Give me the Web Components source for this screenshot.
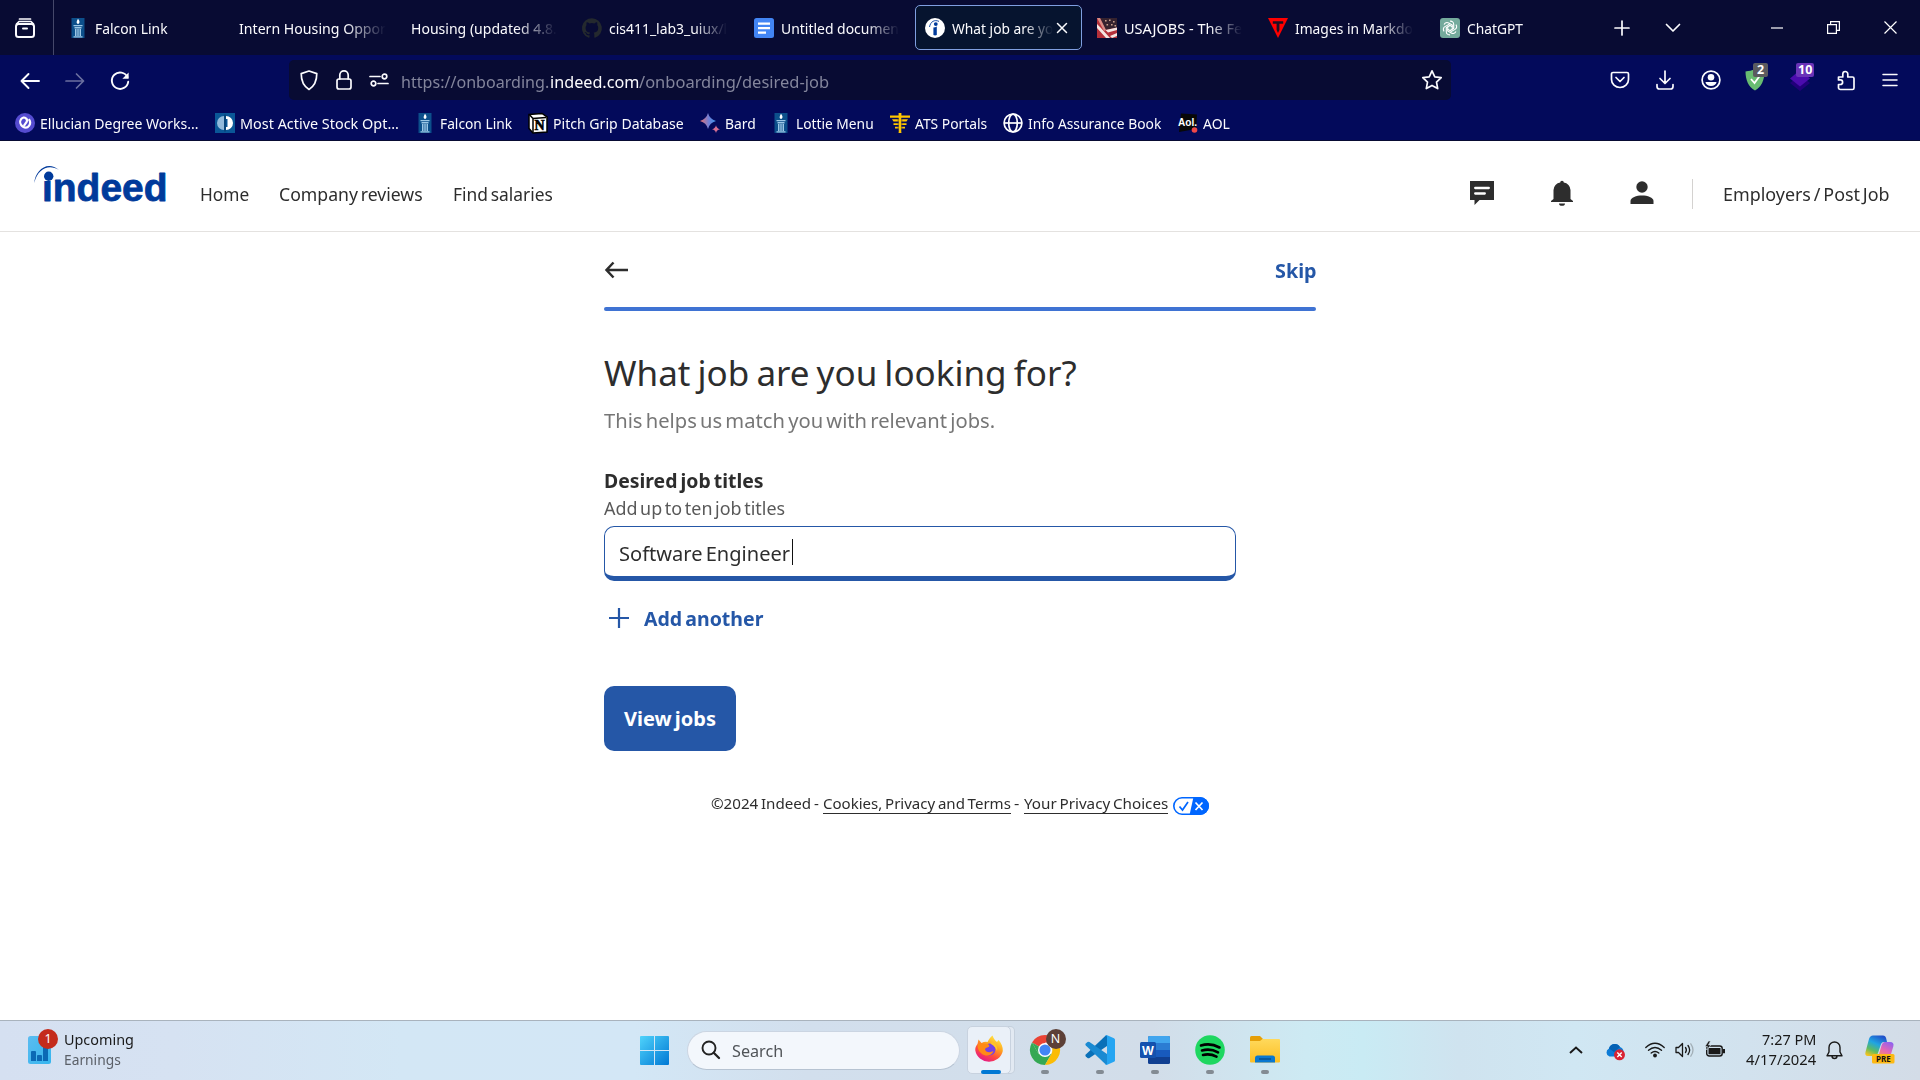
<!DOCTYPE html>
<html lang="en">
<head>
<meta charset="utf-8">
<title>What job are you looking for?</title>
<style>
html,body{margin:0;padding:0}
body{width:1920px;height:1080px;overflow:hidden;background:#fff;display:flex;flex-direction:column;font-family:"Noto Sans","Open Sans",sans-serif;color:#2d2d2d}
</style>
</head>
<body>
<browser-tabs></browser-tabs>
<browser-toolbar></browser-toolbar>
<bookmarks-bar></bookmarks-bar>
<site-header></site-header>
<job-form></job-form>
<site-footer></site-footer>
<task-bar></task-bar>
<script>
const TORCH = '<rect x="3.5" width="13" height="20" fill="#0c4f8b"/><path d="M10 .8c1.700 2 2 3.700.8 5H9.300C8 4.500 8.800 3.200 10 .8z" fill="#fff"/><path d="M5.500 7h9v1.300h-9zM6.500 9h7v1.500h-7zM7 11h1.500v7H7zM9.300 11h1.400v7H9.300zM11.500 11H13v7h-1.500zM5.500 18.300h9v1.200h-9z" fill="#9cc7e6"/>';
const L = 'fill="none" stroke="#fbfbfe" stroke-width="1.700" stroke-linecap="round" stroke-linejoin="round"';
const ICONS = {
view:[20,20,`<g ${L}><rect x="1" y="6" width="18" height="13" rx="2.500" stroke-width="2"/><path d="M1.500 6l2.500-2.500h12L18.500 6M4.500 1h11" /><path d="M8 10.500h4" stroke-width="2"/></g>`],
torch:[20,20,TORCH],
github:[20,20,'<path fill="#24292e" d="M10 .2a10 10 0 0 0-3.200 19.500c.5.1.7-.2.7-.5v-1.900c-2.800.6-3.400-1.200-3.400-1.200-.5-1.200-1.100-1.500-1.100-1.500-.9-.6.1-.6.1-.6 1 .1 1.500 1 1.500 1 .9 1.600 2.400 1.100 2.900.9.1-.7.400-1.100.6-1.300-2.200-.3-4.500-1.100-4.500-4.900 0-1.100.4-2 1-2.700-.1-.2-.4-1.200.1-2.600 0 0 .8-.3 2.700 1a9.500 9.500 0 0 1 5 0c1.900-1.300 2.700-1 2.700-1 .5 1.400.2 2.400.1 2.600.6.7 1 1.600 1 2.700 0 3.900-2.300 4.700-4.600 4.900.4.3.7.900.7 1.900v2.700c0 .3.2.6.7.5A10 10 0 0 0 10 .2z"/>'],
docs:[20,20,'<rect width="20" height="20" rx="2.500" fill="#4285f4"/><path d="M4 4.500h12v2.300H4zM4 9h12v2.300H4zM4 13.500h8v2.300H4z" fill="#fff"/>'],
indeed:[20,20,'<circle cx="10" cy="10" r="10" fill="#fff"/><path d="M8.400 9.500q2 0 3.400-1V17q-1.700.9-3.400 0z" fill="#003a9b"/><circle cx="10.800" cy="6.100" r="1.900" fill="#003a9b"/><path d="M4.500 9C5.500 3.500 9.500 1.300 14 3.400" fill="none" stroke="#003a9b" stroke-width=".9"/>'],
x:[12,12,`<path ${L} style="stroke-width:1.500" d="M1.500 1.500l9 9M10.500 1.500l-9 9"/>`],
usa:[20,20,'<rect width="20" height="20" fill="#b5303a"/><path d="M3 0h17v9.500L8.500 12z" fill="#35222e"/><path d="M3 9l10 11H9L0 10V6zM8.500 12L20 9.500V12L11 14.500zM13 18l7-3v3l-5 2z" fill="#f5e6e2"/><path d="M0 0h3l6 12-2 1z" fill="#d98c86"/><path d="M8 2h1.600v1.600H8zM12 1.500h1.600v1.600H12zM16 3h1.600v1.600H16zM9.500 6h1.600v1.600H9.500zM14 6h1.600v1.600H14zM17.500 7h1.600v1.600h-1.600z" fill="#c9a08d"/>'],
tri:[20,20,'<path d="M0 0h20L10 20z" fill="#f00"/><path d="M4.800 3.300h10.400v2.400h-3.800V12L10 15l-1.400-3V5.700H4.800z" fill="#1c1024"/>'],
gpt:[20,20,'<rect width="20" height="20" rx="3" fill="#74aa9c"/><g fill="none" stroke="#fff" stroke-width="1.100">'+[0,60,120,180,240,300].map(a=>`<path d="M10 3.200c2-.3 3.700 1 3.700 3.100v4.200L10 12.600" transform="rotate(${a} 10 10)"/>`).join('')+'</g>'],
plus:[16,16,`<path ${L} d="M8 1v14M1 8h14"/>`],
down:[16,16,`<path ${L} d="M1.500 4.500L8 11l6.500-6.500"/>`],
min:[12,12,'<path d="M0 6h12" stroke="#fff" stroke-width="1.200"/>'],
restore:[13,13,'<path d="M.6 3.600h8.800v8.800H.6zM3.600 3.600v-3h8.800v8.800h-3" fill="none" stroke="#fff" stroke-width="1.200"/>'],
close:[13,13,'<path d="M.5.5l12 12M12.500.5l-12 12" stroke="#fff" stroke-width="1.200"/>'],
back:[20,20,`<path ${L} style="stroke-width:1.900" d="M19 10H1.500M8.500 3L1.500 10l7 7"/>`],
fwd:[20,20,`<path ${L} opacity=".42" d="M1 10h17.500M11.500 3l7 7-7 7"/>`],
reload:[20,20,`<path ${L} style="stroke-width:1.900" d="M17.500 6.200A8.200 8.200 0 1 0 18.200 10.800"/><path d="M18.600 1.500v6.200h-6.200z" fill="#fbfbfe"/>`],
shield:[20,22,`<path ${L} d="M10 2l7.800 2.600c0 7.400-2.300 12.600-7.800 15.900C4.500 17.200 2.200 12 2.200 4.600z"/>`],
lock:[18,22,`<g ${L}><rect x="2" y="10" width="14" height="10" rx="2"/><path d="M4.800 10V6a4.200 4.200 0 0 1 8.400 0v4"/></g>`],
perm:[20,14,`<g ${L}><path d="M1 3.500h10M9 10.500h10"/><circle cx="15.500" cy="3.500" r="2.300"/><circle cx="4.500" cy="10.500" r="2.300"/></g>`],
star:[22,22,`<path ${L} d="M11 1.800l2.800 6 6.400.8-4.700 4.500 1.200 6.500-5.700-3.200-5.700 3.200 1.200-6.500L1.800 8.600l6.400-.8z"/>`],
pocket:[20,20,`<g ${L}><path d="M3 2.500h14a1.500 1.500 0 0 1 1.500 1.500v5.500a8.500 8 0 0 1-17 0V4A1.500 1.500 0 0 1 3 2.500z"/><path d="M6 7.500l4 4 4-4"/></g>`],
download:[20,20,`<path ${L} d="M10 1v12M5 8.500l5 5 5-5M2 14.500v2A2.500 2.500 0 0 0 4.500 19h11a2.500 2.500 0 0 0 2.500-2.500v-2"/>`],
account:[20,20,`<circle cx="10" cy="10" r="8.900" ${L}/><circle cx="10" cy="7.300" r="3.300" fill="#fbfbfe"/><path d="M4.500 12h11a5.500 4 0 0 1-11 0z" fill="#fbfbfe"/>`],
adguard:[20,22,'<path d="M10 0c3 1.500 6 2 9.500 2.500C19.500 11 16.500 18 10 21.500 3.500 18 .5 11 .5 2.500 4 2 7 1.500 10 0z" fill="#68bc71"/><path d="M6 10l3.500 4L15 6.500" fill="none" stroke="#fff" stroke-width="1.800"/>'],
purple:[20,22,'<path d="M10 6l10 8-10 8-10-8z" fill="#21007a"/><path d="M10 1l10 8.500-10 8-10-8z" fill="#4b0cae"/>'],
puzzle:[20,22,`<path ${L} d="M2.500 8h4.300V5a2.500 2.500 0 0 1 5 0v3h4.700a1.500 1.500 0 0 1 1.500 1.500V19a1.500 1.500 0 0 1-1.500 1.500h-12A2 2 0 0 1 2.500 19v-3.500h1.800a2.300 2.300 0 0 0 0-4.600H2.500z"/>`],
menu:[16,16,`<path ${L} style="stroke-width:1.500" d="M1 2.500h14M1 8h14M1 13.500h14"/>`],
ellucian:[20,20,'<circle cx="10" cy="10" r="10" fill="#554cd0"/><path d="M7 10.700h4.800a2.800 2.800 0 0 0 2.500-2.500c.3-2-1-3.600-3.400-3.600-3 0-5.100 2.500-5.100 5.600 0 2.700 1.700 4.700 4.400 4.700 2.500 0 4.400-1.600 5.200-4" fill="none" stroke="#fff" stroke-width="2.200" transform="rotate(-55 10 10)"/>'],
stock:[20,20,'<rect width="20" height="20" fill="#0a5797"/><path d="M9 3A7 7 0 0 0 9 17z" fill="#92badb"/><path d="M11 3a7 7 0 0 1 0 14v-3h1.500V6H11z" fill="#fff"/><path d="M10 1.500v17" stroke="#053969" stroke-width="1.200"/>'],
notion:[20,20,'<path d="M1 1.500L14 .5l5 3.500v15l-14 1-4-4.500z" fill="#fff" stroke="#000" stroke-width="1.500"/><path d="M1.500 1.800L5 5.500v14" fill="none" stroke="#000" stroke-width="1.500"/><path d="M5 5.500l13-1" stroke="#000" stroke-width="1.500"/><text x="6.500" y="17.200" font-family="Liberation Serif" font-weight="bold" font-size="14" fill="#000" stroke="#000" stroke-width=".6">N</text>'],
bard:[20,20,'<defs><linearGradient id="g"><stop offset="0" stop-color="#e8716f"/><stop offset=".55" stop-color="#6f7fd8"/><stop offset="1" stop-color="#3d93e8"/></linearGradient></defs><path d="M8 0c1.300 4.300 3.700 6.700 8 8-4.300 1.300-6.700 3.700-8 8-1.300-4.300-3.700-6.700-8-8 4.300-1.300 6.700-3.700 8-8z" fill="url(#g)"/><path d="M16 12.300c.6 2.300 1.600 3.300 4 4-2.400.6-3.400 1.700-4 3.700-.6-2-1.600-3.100-4-3.700 2.400-.7 3.400-1.700 4-4z" fill="#d56e92"/>'],
ats:[20,20,'<path d="M8.600 0h2.800v20H8.600zM0 2.500h20v2.300H0zM2 6.300h16l-1.500 2.300h-13zM3.500 10.200h13V12h-13zM5 13.700h10v1.900H5z" fill="#ffc600"/><path d="M8.200 5v14M11.800 5v14" stroke="#030a5b" stroke-width=".5"/>'],
globe:[20,20,'<g fill="none" stroke="#fff" stroke-width="1.700"><circle cx="10" cy="10" r="8.900"/><ellipse cx="10" cy="10" rx="4.300" ry="8.900"/><path d="M1 10h18"/></g>'],
aol:[20,20,'<path d="M3 .5l16 1-1 14.500L1 19z" fill="#080808"/><circle cx="16.500" cy="17" r="2.800" fill="#f04848"/><text x="0" y="13" font-family="Liberation Sans" font-weight="bold" font-size="10" textLength="19" lengthAdjust="spacingAndGlyphs" fill="#fff">Aol.</text>'],
logo:[134,38,'<text x="8" y="35.600" font-family="Liberation Sans" font-weight="bold" font-size="39.500" textLength="125.500" lengthAdjust="spacingAndGlyphs" fill="#003a9b" stroke="#003a9b" stroke-width=".8" stroke-linejoin="round">indeed</text><path d="M8 5h12v11H8z" fill="#fff"/><circle cx="14.700" cy="11.300" r="4.700" fill="#003a9b"/><path d="M.3 18C1 6 13-5 25 5 15-1 4 3 .3 18z" fill="#003a9b"/>'],
msg:[24,24,'<path d="M0 0h24v19H9.500L4.500 24v-5H0z" fill="#2d2d2d"/><path d="M5.200 7h13.600M5.200 12.500h9.600" stroke="#fff" stroke-width="2.300" stroke-linecap="round"/>'],
bell:[24,26,'<path d="M10.200 2.500a1.800 1.800 0 0 1 3.600 0A8 8 0 0 1 20.500 10v9l2.500 2v1H1v-1l2.500-2v-9a8 8 0 0 1 6.700-7.500zM9 23.500h6a3 2.300 0 0 1-6 0z" fill="#2d2d2d"/>'],
person:[24,24,'<circle cx="12" cy="6" r="5.700" fill="#2d2d2d"/><path d="M.5 23v-3c0-3.500 6-5.500 11.500-5.500s11.500 2 11.500 5.500v3z" fill="#2d2d2d"/>'],
arrow:[24,18,'<path d="M24 9H3M9.500 1.500L2.500 9l7 7.500" fill="none" stroke="#2d2d2d" stroke-width="2.500"/>'],
add:[20,20,'<path d="M10 0v20M0 10h20" stroke="#2557a7" stroke-width="2.200"/>'],
pill:[36,18,'<rect x=".8" y=".8" width="34.400" height="16.400" rx="8.200" fill="#fff" stroke="#06f" stroke-width="1.600"/><path d="M20.500 0H27a9 9 0 0 1 0 18H16.500z" fill="#06f"/><path d="M6.500 9.500l3 3.500 5.500-8" fill="none" stroke="#06f" stroke-width="1.700"/><path d="M22.500 5.500l7 7.500M29.500 5.500l-7 7.500" stroke="#fff" stroke-width="1.700"/>'],
widget:[24,29,'<defs><linearGradient id="a" x2="1" y2="1"><stop stop-color="#5bbcf1"/><stop offset="1" stop-color="#35b5ee"/></linearGradient></defs><rect width="23" height="28" rx="2.500" fill="url(#a)"/><path d="M3 16q0-1 1-1h3q1 0 1 1v9H3zM9 20q0-1 1-1h3q1 0 1 1v5H9zM15 11h5v14h-5z" fill="#0b69b5"/>'],
start:[29,29,'<defs><linearGradient id="a" x2="1" y2="1"><stop stop-color="#4fd3fb"/><stop offset="1" stop-color="#0078d4"/></linearGradient></defs><path d="M0 1q0-1 1-1h13v14H0zM15 0h13q1 0 1 1v13H15zM0 15h14v14H1q-1 0-1-1zM15 15h14v13q0 1-1 1H15z" fill="url(#a)"/>'],
search:[19,20,'<circle cx="8" cy="8" r="6.500" fill="none" stroke="#222" stroke-width="1.900"/><path d="M12.700 12.700L18 18" stroke="#222" stroke-width="2.300" stroke-linecap="round"/>'],
firefox:[30,30,'<defs><linearGradient id="a" x1=".85" y1="0" x2=".3" y2="1"><stop stop-color="#fff44f"/><stop offset=".4" stop-color="#ffa51f"/><stop offset=".7" stop-color="#ff4a3f"/><stop offset="1" stop-color="#e3168c"/></linearGradient></defs><path d="M3.500 9L4.500 4.500 7.500 8q3-1.600 6-1c1.500-3 3-5 5-6.500 1 3 2.500 5 4.500 6.500l1.500-2C27.500 8 29 12 28.800 16A14 13.500 0 0 1 1.300 15.500C1 13 2 11 3.500 9z" fill="url(#a)"/><circle cx="15.500" cy="14.500" r="6" fill="#7542e5"/><path d="M4 9l4-.5 6 .5 1.500 2c-1 1.500-3.500 1.500-4.500 3 .5 3.500 5 4 8.500 2-1.500 5-8 6-12 2.500S3.500 12 4 9z" fill="#ff8a16"/><path d="M18 7c4 2 6 5 5 9-1-3-2.500-5-6-7z" fill="#ffc52a"/>'],
chrome:[30,30,'<path d="M15 15L2 7.500A15 15 0 0 1 28 7.500H15z" fill="#ea4335"/><path d="M2 7.500A15 15 0 0 0 15 30l6.500-11.200-13 0z" fill="#34a853"/><path d="M28 7.500A15 15 0 0 1 15 30l6.500-11.200Q24 13 20 7.500z" fill="#fbbc05"/><path d="M2 7.500L8.500 18.800 15 15z" fill="#34a853"/><circle cx="15" cy="15" r="7" fill="#fff"/><circle cx="15" cy="15" r="5.600" fill="#4285f4"/>'],
vscode:[30,30,'<path d="M22 6v5L4.500 23q-1 .6-2 0L.8 21.500q-1-1 0-2L20.500.8 22 0z" fill="#0a70b8"/><path d="M22 24v-5L4.500 7q-1-.6-2 0L.8 8.500q-1 1 0 2L20.500 29.200 22 30z" fill="#1a8ad2"/><path d="M20 .6q1-.9 2.200-.4L29 3.300q1 .5 1 1.500v20.400q0 1-1 1.500l-6.800 3.100q-1.200.5-2.200-.4 2 .6 2-1.400V2Q22 0 20 .6z" fill="#25a5f2"/>'],
word:[30,28,'<rect x="8" width="22" height="28" rx="1.500" fill="#103f91"/><path d="M8 1.500Q8 0 9.500 0h19Q30 0 30 1.500V7H8z" fill="#41a5ee"/><path d="M8 7h22v7H8z" fill="#2b7cd3"/><path d="M8 14h22v7H8z" fill="#185abd"/><rect y="6" width="16" height="16" rx="1.500" fill="#1451ae"/><text x="8" y="18.500" text-anchor="middle" font-family="Liberation Sans" font-weight="bold" font-size="12.500" fill="#fff">W</text>'],
spotify:[30,30,'<circle cx="15" cy="15" r="14.800" fill="#1ed760"/><path d="M6 10.500q9.500-3 18.500 2M7 15.500q8.500-2.300 16 1.800M8 20q7-1.800 13.500 1.700" fill="none" stroke="#000" stroke-width="2.600" stroke-linecap="round"/>'],
folder:[30,28,'<defs><linearGradient id="a" x2="0" y2="1"><stop stop-color="#ffd95c"/><stop offset="1" stop-color="#fcbf24"/></linearGradient></defs><path d="M0 1.500Q0 0 1.500 0h8.500l3 3v4H0z" fill="#e59f08"/><path d="M0 5h10l2.500-2H29q1 0 1 1v21.500q0 1-1 1H1q-1 0-1-1z" fill="url(#a)"/><path d="M5 26.500v-4.500q0-2.500 2.500-2.500h15q2.500 0 2.500 2.500v4.500z" fill="#0a78d0"/><path d="M9 23h12" stroke="#054b89" stroke-width="1.300"/>'],
up:[14,8,'<path d="M1 7l6-5.500L13 7" fill="none" stroke="#191919" stroke-width="1.900"/>'],
onedrive:[20,18,'<path d="M4.500 13.500A4.300 4.300 0 0 1 4 5.500 6 6 0 0 1 15 4a5 5 0 0 1 3.500 4.500v5z" fill="#0c7bd6"/><path d="M4 5.500A6 6 0 0 1 15 4L9 9z" fill="#0561b4"/><circle cx="14.500" cy="11.800" r="5.500" fill="#d92332"/><path d="M12.300 9.600l4.400 4.400M16.700 9.600L12.300 14" stroke="#fff" stroke-width="1.400"/>'],
wifi:[20,16,'<g fill="none" stroke="#191919" stroke-width="1.400" stroke-linecap="round"><path d="M.8 5.500Q10-2.800 19.200 5.500M3.500 8.300q6.500-5.600 13 0M6.200 11q3.800-3.200 7.600 0"/></g><circle cx="10" cy="13.500" r="1.900" fill="#191919"/>'],
sound:[20,16,'<g fill="none" stroke="#191919" stroke-width="1.300" stroke-linejoin="round" stroke-linecap="round"><path d="M1 5.500h2.500l4-4v13l-4-4H1zM10.500 5.500q1.800 2.500 0 5M13 3.500q3.300 4.500 0 9"/><path d="M15.800 1.800q4.400 6.200 0 12.400" stroke="#a3afb7"/></g>'],
battery:[20,16,'<rect x="1.700" y="4" width="15.500" height="10" rx="2.500" fill="none" stroke="#191919" stroke-width="1.400"/><path d="M3.500 6h12v6.200h-12zM17.500 7H20v4.200h-2.500z" fill="#191919"/><path d="M3.500-1L0 4.500h2.500L1.500 8 6 3H3.500L5.500-1z" fill="#191919" stroke="#d1e3ef" stroke-width=".6"/>'],
tbell:[17,19,'<path d="M8.500 1a5.500 5.500 0 0 1 5.500 5.500V11l2 3.800H1L3 11V6.500A5.500 5.500 0 0 1 8.500 1zM6 15a2.500 2.500 0 0 0 5 0" fill="none" stroke="#191919" stroke-width="1.400" stroke-linejoin="round"/>'],
copilot:[30,30,'<defs><linearGradient id="a" x1=".7" x2=".2" y2="1"><stop stop-color="#2052cb"/><stop offset=".4" stop-color="#20a5e3"/><stop offset=".72" stop-color="#5dbb63"/><stop offset="1" stop-color="#f4c31d"/></linearGradient><linearGradient id="b" x1=".8" x2=".2" y2="1"><stop stop-color="#8f62ef"/><stop offset=".5" stop-color="#e467b5"/><stop offset="1" stop-color="#fb9659"/></linearGradient></defs><path d="M8 .5h10q2.500 0 3.200 3L22 7h-3q-2.500 0-3.300 3L13 18q-1 3-4 3H3q-3.500 0-2.500-4L4 4Q5 .5 8 .5z" fill="url(#a)"/><path d="M20 7h5q4.500 0 3.300 4.500L26 19q-1 3.500-4.500 3.500H10q3 0 4-3.500l2.500-8.500Q17.500 7 20 7z" fill="url(#b)"/><rect x="7" y="19" width="22.500" height="9.500" rx="1.500" fill="#fdb913"/><text x="18.300" y="26.500" text-anchor="middle" font-family="Noto Sans" font-weight="bold" font-size="8" fill="#111">PRE</text>']
};
customElements.define('ui-icon', class extends HTMLElement{
  connectedCallback(){
    const [w,h,body]=ICONS[this.getAttribute('name')];
    if(!this.shadowRoot)this.attachShadow({mode:'open'});
    this.shadowRoot.innerHTML=`<style>:host{display:block;flex:none;width:${w}px;height:${h}px}svg{display:block;overflow:visible}</style><svg width="${w}" height="${h}" viewBox="0 0 ${w} ${h}">${body}</svg>`;
  }
});
/* Text run that is drawn at the advance width given in its "w" attribute. */
customElements.define('fit-text', class extends HTMLElement{
  connectedCallback(){
    if(!this.shadowRoot)this.attachShadow({mode:'open'});
    const w=+this.getAttribute('w');
    this.shadowRoot.innerHTML=`<style>:host{display:block;flex:none;width:${w}px;white-space:pre}span{display:inline-block;transform-origin:0 50%}</style><span><slot></slot></span>`;
    const s=this.shadowRoot.querySelector('span');
    s.style.transform=`scaleX(${w/s.offsetWidth})`;
  }
});
const define=(name,html)=>{
  const t=document.createElement('template');t.innerHTML=html;
  customElements.define(name,class extends HTMLElement{
    connectedCallback(){ if(this.shadowRoot)return; this.attachShadow({mode:'open'}).append(document.importNode(t.content,true)); }
  });
};
const m=n=>`style="margin-left:${n}px"`;
define('browser-tab',`<style>:host{display:flex;align-items:center;box-sizing:border-box;flex:none;width:171.500px;height:45px;padding:0 0 0 10px;gap:7px}
:host([active]){width:167px;margin-right:4.500px;background:#06142f;border:1px solid #7f9fe0;border-radius:5px;padding-left:9px}
:host([fade]) slot:not([name]){display:block;-webkit-mask:linear-gradient(90deg,#000 72%,transparent);mask:linear-gradient(90deg,#000 72%,transparent)}</style>
<slot name="icon"></slot><slot></slot><slot name="end"></slot>`);
const tab=(icon,w,text,attr='')=>`<browser-tab ${attr}>${icon?`<ui-icon slot="icon" name="${icon}"></ui-icon>`:''}<fit-text w="${w}">${text}</fit-text>${attr.includes('active')?'<ui-icon slot="end" name="x" style="margin-left:-4px"></ui-icon>':''}</browser-tab>`;
define('browser-tabs',`<style>:host{display:flex;align-items:center;flex:none;height:55px;background:#080b33;color:#fbfbfe;font-size:15px}i{width:1px;height:55px;background:#45486a;margin:0 3.700px 0 18px}</style>
<ui-icon name="view" ${m(15)}></ui-icon><i></i>
${tab('torch',73,'Falcon Link')}${tab('',147,'Intern Housing Oppor','fade')}${tab('',146,'Housing (updated 4.8.','fade')}${tab('github',118,'cis411_lab3_uiux/l','fade')}${tab('docs',118,'Untitled documen','fade')}${tab('indeed',101,'What job are yo','fade active')}${tab('usa',118,'USAJOBS - The Fe','fade')}${tab('tri',118,'Images in Markdo','fade')}${tab('gpt',56,'ChatGPT')}
<ui-icon name="plus" ${m(13.3)}></ui-icon><ui-icon name="down" ${m(35)}></ui-icon><ui-icon name="min" ${m(89.5)}></ui-icon><ui-icon name="restore" style="margin:-1px 0 0 44.500px"></ui-icon><ui-icon name="close" style="margin:-1px 0 0 43.500px"></ui-icon>`);
define('count-badge',`<style>:host{position:absolute;left:8px;top:-6px;height:14px;padding:0 4px;border-radius:2px;background:var(--bg);color:#fff;font:bold 12.500px/14px "Open Sans","Noto Sans",sans-serif}</style><slot></slot>`);
define('browser-toolbar',`<style>:host{display:flex;align-items:center;flex:none;height:50px;background:#030a5b;color:#fbfbfe}
.url{display:flex;align-items:center;width:1162px;height:40px;background:#080b33;border-radius:5px;margin-left:159px;font-size:17px}
.dim{color:#83859c}.b{position:relative}.n{margin-top:1px}</style>
<ui-icon class="n" name="back" ${m(20)}></ui-icon><ui-icon class="n" name="fwd" ${m(25)}></ui-icon><ui-icon class="n" name="reload" ${m(25)}></ui-icon>
<div class="url"><ui-icon name="shield" ${m(10)}></ui-icon><ui-icon name="lock" ${m(16)}></ui-icon><ui-icon name="perm" ${m(16)}></ui-icon>
<fit-text class="dim" w="148.500" style="margin:3px 0 0 12px">https://onboarding.</fit-text><fit-text w="89.500" style="margin-top:3px">indeed.com</fit-text><fit-text class="dim" w="190" style="margin-top:3px">/onboarding/desired-job</fit-text>
<ui-icon name="star" ${m(592)}></ui-icon></div>
<ui-icon name="pocket" ${m(159)}></ui-icon><ui-icon name="download" ${m(24.5)}></ui-icon><ui-icon name="account" ${m(26)}></ui-icon>
<div class="b" ${m(24.5)}><ui-icon name="adguard"></ui-icon><count-badge style="--bg:#5b5b5f">2</count-badge></div>
<div class="b" ${m(25)}><ui-icon name="purple"></ui-icon><count-badge style="--bg:#6a33b8;left:6px;padding:0 2px">10</count-badge></div>
<ui-icon name="puzzle" ${m(25.5)}></ui-icon><ui-icon name="menu" ${m(26)}></ui-icon>`);
const bm=(icon,w,t)=>`<div><ui-icon name="${icon}"></ui-icon><fit-text w="${w}">${t}</fit-text></div>`;
define('bookmarks-bar',`<style>:host{display:flex;align-items:center;flex:none;box-sizing:border-box;height:36px;background:#030a5b;border-bottom:1px solid #080b33;padding-left:15px;gap:16px;color:#fbfbfe;font-size:15px}div{display:flex;align-items:center;gap:5px}</style>
${bm('ellucian',159,'Ellucian Degree Works...')}${bm('stock',158.500,'Most Active Stock Opt...')}${bm('torch',72.500,'Falcon Link')}${bm('notion',130.500,'Pitch Grip Database')}${bm('bard',30.500,'Bard')}${bm('torch',78,'Lottie Menu')}${bm('ats',72,'ATS Portals')}${bm('globe',133.500,'Info Assurance Book')}${bm('aol',27,'AOL')}`);
define('site-header',`<style>:host{display:flex;align-items:center;flex:none;box-sizing:border-box;height:91px;border-bottom:1px solid #e4e2e0;font-size:18px;word-spacing:-.1em}fit-text{margin-top:16px}i{width:1px;height:30px;background:#d4d2d0;margin:16px 31px 0 38px}ui-icon{margin-top:14px}</style>
<ui-icon name="logo" style="margin:-4px 0 0 34px"></ui-icon><fit-text w="49" ${m(32)}>Home</fit-text><fit-text w="144" ${m(30)}>Company reviews</fit-text><fit-text w="99.500" ${m(30)}>Find salaries</fit-text>
<ui-icon name="msg" ${m(917.5)}></ui-icon><ui-icon name="bell" ${m(56)}></ui-icon><ui-icon name="person" ${m(56)}></ui-icon><i></i><fit-text w="167" style="margin-left:-1px">Employers / Post Job</fit-text>`);
define('text-input',`<style>:host{display:flex;align-items:center;box-sizing:border-box;width:632px;height:55px;border:1px solid #2557a7;border-bottom-width:5px;border-radius:10px;padding:3px 0 0 14px}i{width:1px;height:26px;background:#111;margin:-2px 0 0 1px}</style><slot></slot><i></i>`);
define('primary-button',`<style>:host{display:flex;align-items:center;justify-content:center;width:132px;height:65px;border-radius:10px;background:#2557a7;color:#fff;font-weight:700}</style><slot></slot>`);
define('job-form',`<style>:host{display:flex;flex-direction:column;flex:none;width:712px;margin-left:604px;font-size:20px;word-spacing:-.1em}
.top{display:flex;align-items:center;justify-content:space-between;height:75px}.bar{height:4px;border-radius:2px;background:#3f73d3}
.l{color:#2557a7;font-weight:700}.add{display:flex;align-items:center;height:28px;margin-top:23px}
.s{line-height:28px}</style>
<div class="top"><ui-icon name="arrow"></ui-icon><fit-text class="l" w="41.500" style="margin-top:2px">Skip</fit-text></div><div class="bar"></div>
<fit-text w="473" style="font-size:35px;line-height:48px;margin-top:38px">What job are you looking for?</fit-text>
<fit-text class="s" w="391" style="color:#767676;margin-top:10px">This helps us match you with relevant jobs.</fit-text>
<fit-text class="s" w="160" style="font-weight:700;margin-top:32px">Desired job titles</fit-text>
<fit-text w="181" style="font-size:18px;line-height:24px;color:#595959;margin-top:1px">Add up to ten job titles</fit-text>
<text-input style="margin-top:6px"><fit-text w="171.500">Software Engineer</fit-text></text-input>
<div class="add"><ui-icon name="add" ${m(5)}></ui-icon><fit-text class="l" w="119" ${m(15)}>Add another</fit-text></div>
<primary-button style="margin-top:54px"><fit-text w="92">View jobs</fit-text></primary-button>`);
define('site-footer',`<style>:host{display:flex;flex:1;margin:41px 0 0 711px;font-size:15px;line-height:22px;word-spacing:-.08em}.u{box-sizing:border-box;height:22px;border-bottom:1px solid #2d2d2d}</style>
<fit-text w="108">©2024 Indeed -</fit-text><fit-text class="u" w="187.500" ${m(4)}>Cookies, Privacy and Terms</fit-text><fit-text w="5.500" ${m(3.5)}>-</fit-text><fit-text class="u" w="144" ${m(4)}>Your Privacy Choices</fit-text><ui-icon name="pill" style="margin:4.500px 0 0 5px"></ui-icon>`);
define('task-app',`<style>:host{display:flex;flex:none;flex-direction:column;align-items:center;justify-content:center;position:relative;width:55px;height:48px}i{position:absolute;left:23.500px;bottom:0;width:8px;height:4px;border-radius:2px;background:#838b93}
:host([active]){width:44px;margin:0 7px 0 0;box-sizing:border-box;background:#eaf0f8;border:1px solid #c8d2df;border-radius:5px;box-shadow:4px 0 0 -1px #e2e9f2,4px 0 0 0 #c5d0dd}:host([active]) i{left:13px;bottom:-1px;width:20px;background:#0078d4}</style><slot></slot><i></i>`);
define('dot-badge',`<style>:host{position:absolute;display:flex;align-items:center;justify-content:center;width:20px;height:20px;border-radius:50%;background:var(--bg);color:#fff;font-size:12.500px;line-height:20px}</style><slot></slot>`);
define('task-bar',`<style>:host{display:flex;align-items:center;flex:none;box-sizing:border-box;height:60px;padding-bottom:1px;border-top:1px solid #a9b3bd;background:linear-gradient(90deg,#d5e0f1 0,#d6e2f2 9%,#d3e7f5 21%,#d3e7f6 33%,#d2dfed 42%,#d2dde9 60%,#cdeaf3 68%,#c9ebf4 71%,#cfe3ef 76%,#d0e7f3 82%,#d2e2ee 91%,#d3dce7 100%);color:#191919;font-size:15px}
.w{position:relative;margin-left:28px}.c{line-height:20px;width:73px;padding-bottom:3px}.r{display:flex;flex-direction:column;align-items:flex-end;width:73px}
.s{display:flex;align-items:center;box-sizing:border-box;width:273px;height:39px;border-radius:20px;background:#f3f7fc;border:1px solid #cbd5e2;border-bottom-color:#b6c3d2;margin:0 7px 0 18px;padding-left:13px;font-size:16.500px;color:#505458}</style>
<div class="w"><ui-icon name="widget"></ui-icon><dot-badge style="--bg:#c42b1c;left:10px;top:-7px">1</dot-badge></div>
<div class="c" ${m(12)}><fit-text w="70">Upcoming</fit-text><fit-text w="57" style="color:#5b6068">Earnings</fit-text></div>
<ui-icon name="start" ${m(502.5)}></ui-icon>
<div class="s"><ui-icon name="search"></ui-icon><fit-text w="51" style="margin:1px 0 0 12px">Search</fit-text></div>
<task-app active><ui-icon name="firefox"></ui-icon></task-app>
<task-app><ui-icon name="chrome"></ui-icon><dot-badge style="--bg:#5d4037;left:28px;top:3px">N</dot-badge></task-app>
<task-app><ui-icon name="vscode"></ui-icon></task-app><task-app><ui-icon name="word"></ui-icon></task-app><task-app><ui-icon name="spotify"></ui-icon></task-app><task-app><ui-icon name="folder"></ui-icon></task-app>
<ui-icon name="up" ${m(276.5)}></ui-icon><ui-icon name="onedrive" style="margin:3px 0 0 22px"></ui-icon><ui-icon name="wifi" ${m(20)}></ui-icon><ui-icon name="sound" ${m(10)}></ui-icon><ui-icon name="battery" ${m(10)}></ui-icon>
<div class="r c" ${m(17.5)}><fit-text w="54">7:27 PM</fit-text><fit-text w="70">4/17/2024</fit-text></div><ui-icon name="tbell" ${m(10)}></ui-icon><ui-icon name="copilot" ${m(22.5)}></ui-icon>`);
</script>
</body>
</html>
